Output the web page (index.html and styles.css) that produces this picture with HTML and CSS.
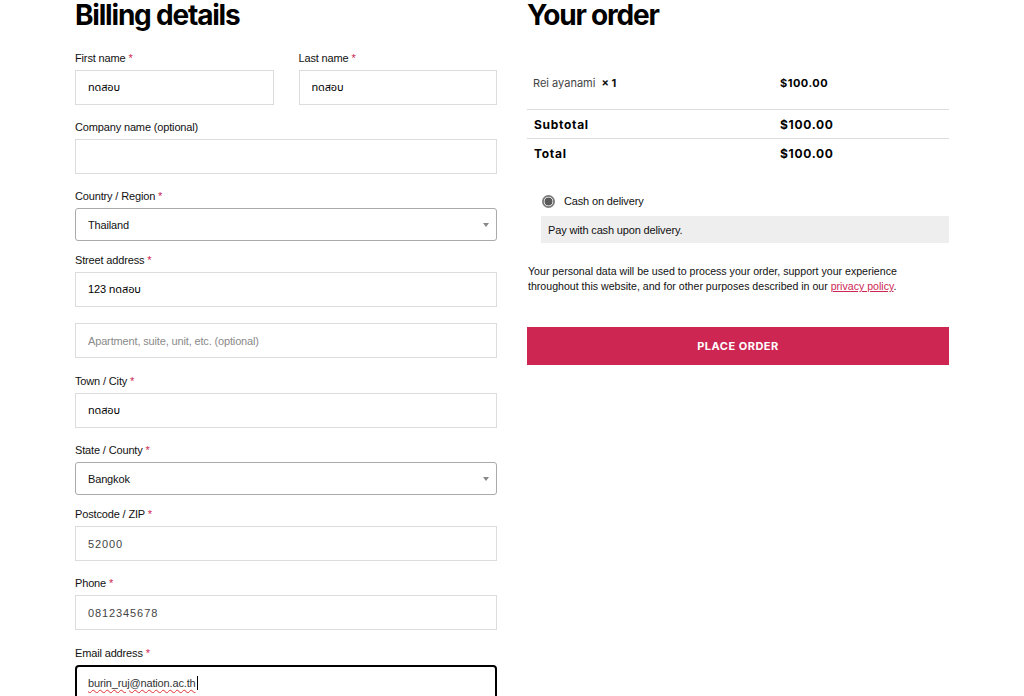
FILE: index.html
```html
<!DOCTYPE html>
<html lang="th">
<head>
<meta charset="utf-8">
<title>Checkout</title>
<link rel="stylesheet" href="styles.css">
</head>
<body>
<div class="checkout">
  <section class="billing">
    <h2 class="heading">Billing details</h2>
    <div class="row-2">
      <div class="field">
        <label class="label">First name <span class="req">*</span></label>
        <input class="input" type="text" value="ทดสอบ">
      </div>
      <div class="field">
        <label class="label">Last name <span class="req">*</span></label>
        <input class="input" type="text" value="ทดสอบ">
      </div>
    </div>
    <div class="field">
      <label class="label">Company name (optional)</label>
      <input class="input" type="text" value="">
    </div>
    <div class="field field-select">
      <label class="label">Country / Region <span class="req">*</span></label>
      <div class="select"><span>Thailand</span><span class="arrow"></span></div>
    </div>
    <div class="field field-wide">
      <label class="label">Street address <span class="req">*</span></label>
      <input class="input input-stack" type="text" value="123 ทดสอบ">
      <input class="input" type="text" placeholder="Apartment, suite, unit, etc. (optional)">
    </div>
    <div class="field">
      <label class="label">Town / City <span class="req">*</span></label>
      <input class="input" type="text" value="ทดสอบ">
    </div>
    <div class="field field-select">
      <label class="label">State / County <span class="req">*</span></label>
      <div class="select"><span>Bangkok</span><span class="arrow"></span></div>
    </div>
    <div class="field">
      <label class="label">Postcode / ZIP <span class="req">*</span></label>
      <input class="input input-num" type="text" value="52000">
    </div>
    <div class="field field-wide">
      <label class="label">Phone <span class="req">*</span></label>
      <input class="input input-num" type="text" value="0812345678">
    </div>
    <div class="field">
      <label class="label">Email address <span class="req">*</span></label>
      <div class="input input-focus"><span class="spell">burin_ruj@nation.ac.th</span><span class="caret"></span></div>
    </div>
  </section>

  <section class="order">
    <h2 class="heading">Your order</h2>
    <div class="order-table">
      <div class="order-row order-item">
        <div class="cell"><span class="product">Rei ayanami</span> <strong class="qty">× 1</strong></div>
        <div class="cell price">$100.00</div>
      </div>
      <div class="order-row order-sum">
        <div class="cell">Subtotal</div>
        <div class="cell">$100.00</div>
      </div>
      <div class="order-row order-sum">
        <div class="cell">Total</div>
        <div class="cell">$100.00</div>
      </div>
    </div>

    <div class="payment">
      <div class="method">
        <span class="radio"></span>
        <span>Cash on delivery</span>
      </div>
      <div class="method-box">Pay with cash upon delivery.</div>
    </div>

    <p class="privacy">Your personal data will be used to process your order, support your experience throughout this website, and for other purposes described in our <a href="#" class="link">privacy policy</a>.</p>

    <button class="place-order" type="button">PLACE ORDER</button>
  </section>
</div>
</body>
</html>
```

FILE: styles.css
```css
* { box-sizing: border-box; }

body {
  margin: 0;
  background: #ffffff;
  color: #000;
  font-family: "Liberation Sans", Arial, "Noto Sans Thai", sans-serif;
  font-size: 11px;
  letter-spacing: -0.15px;
}

.checkout {
  display: flex;
  gap: 30px;
  margin-left: 75px;
  width: 874px;
  align-items: flex-start;
}

.billing, .order {
  width: 422px;
  flex: none;
}

.heading {
  margin: 0 0 20px;
  font-family: Inter, "Noto Sans", sans-serif;
  font-weight: 700;
  font-size: 28px;
  line-height: 30px;
  letter-spacing: -1.2px;
  color: #000;
}

.row-2 {
  display: flex;
  gap: 25px;
}
.row-2 .field { flex: 1; }

.field {
  display: flex;
  flex-direction: column;
  margin-bottom: 14px;
}
.field-wide { margin-bottom: 15px; }
.field-select { margin-bottom: 11px; }

.label {
  display: block;
  line-height: 17px;
  height: 17px;
  margin-bottom: 3px;
  color: #111;
  font-size: 11px;
}

.req { color: #cd2653; }

.input {
  display: block;
  width: 100%;
  height: 35px;
  border: 1px solid #dcdcdc;
  border-radius: 0;
  padding: 0 12px;
  font-family: "Liberation Sans", Arial, "Noto Sans Thai", sans-serif;
  font-size: 11px;
  letter-spacing: -0.15px;
  color: #000;
  background: #fff;
  outline: none;
}
.input::placeholder { color: #8a8a8a; }
.input-stack { margin-bottom: 16px; }
.input-num { color: #444; letter-spacing: 0.9px; }

.input-focus {
  border: 2px solid #000;
  border-radius: 4px;
  padding: 0 11px;
  display: flex;
  align-items: center;
  color: #333;
}
.spell {
  text-decoration: underline wavy #e03030;
  text-decoration-thickness: 1px;
  text-underline-offset: 2px;
}
.caret {
  display: inline-block;
  width: 1px;
  height: 14px;
  background: #000;
  margin-left: 1px;
}

.select {
  height: 33px;
  border: 1px solid #aaaaaa;
  border-radius: 3px;
  padding: 0 12px;
  display: flex;
  align-items: center;
  justify-content: space-between;
  color: #111;
  font-size: 11px;
}
.arrow {
  width: 0;
  height: 0;
  border-left: 3px solid transparent;
  border-right: 3px solid transparent;
  border-top: 4px solid #888;
  margin-right: -5px;
}

/* order */
.order-table {
  margin-top: 26px;
  display: flex;
  flex-direction: column;
}
.order-row {
  display: grid;
  grid-template-columns: 247px 1fr;
  align-items: center;
}
.order-item {
  height: 54px;
  border-bottom: 1px solid #dcdcdc;
}
.order-sum {
  height: 28px;
  font-family: Inter, "Noto Sans", sans-serif;
  font-weight: 700;
  font-size: 12px;
  letter-spacing: 0.7px;
  color: #000;
}
.order-sum + .order-sum {
  height: 29px;
  border-top: 1px solid #dcdcdc;
}
.order-sum .cell:first-child { padding-left: 7px; }
.cell { padding-left: 6px; }

.order-item .cell {
  font-family: Inter, "Noto Sans", sans-serif;
  font-size: 11px;
  color: #444;
  letter-spacing: 0;
}
.qty { color: #111; font-weight: 700; margin-left: 3px; }
.order-item .price {
  font-weight: 700;
  color: #000;
  letter-spacing: 0.5px;
}

.payment {
  margin-top: 26px;
  padding-left: 14px;
}
.method {
  display: flex;
  align-items: center;
  gap: 9px;
  height: 16px;
  padding-left: 1px;
  color: #111;
}
.radio {
  width: 13px;
  height: 13px;
  border-radius: 50%;
  background: radial-gradient(circle, #5a5a5a 0 3.6px, #d8d8d8 4.2px 4.6px, #7a7a7a 5.1px 6.5px);
  flex: none;
}
.method-box {
  margin-top: 7px;
  height: 27px;
  background: #eeeeee;
  padding-left: 7px;
  display: flex;
  align-items: center;
  color: #111;
}

.privacy {
  margin: 21px 0 0;
  font-size: 10.6px;
  letter-spacing: 0;
  line-height: 15px;
  color: #111;
  padding-left: 1px;
}
.link { color: #cd2653; text-decoration: underline; }

.place-order {
  display: block;
  width: 100%;
  height: 38px;
  margin-top: 33px;
  border: none;
  background: #cd2653;
  color: #fff;
  font-family: Inter, "Noto Sans", sans-serif;
  font-weight: 700;
  font-size: 11px;
  letter-spacing: 0.5px;
  cursor: pointer;
}
```
